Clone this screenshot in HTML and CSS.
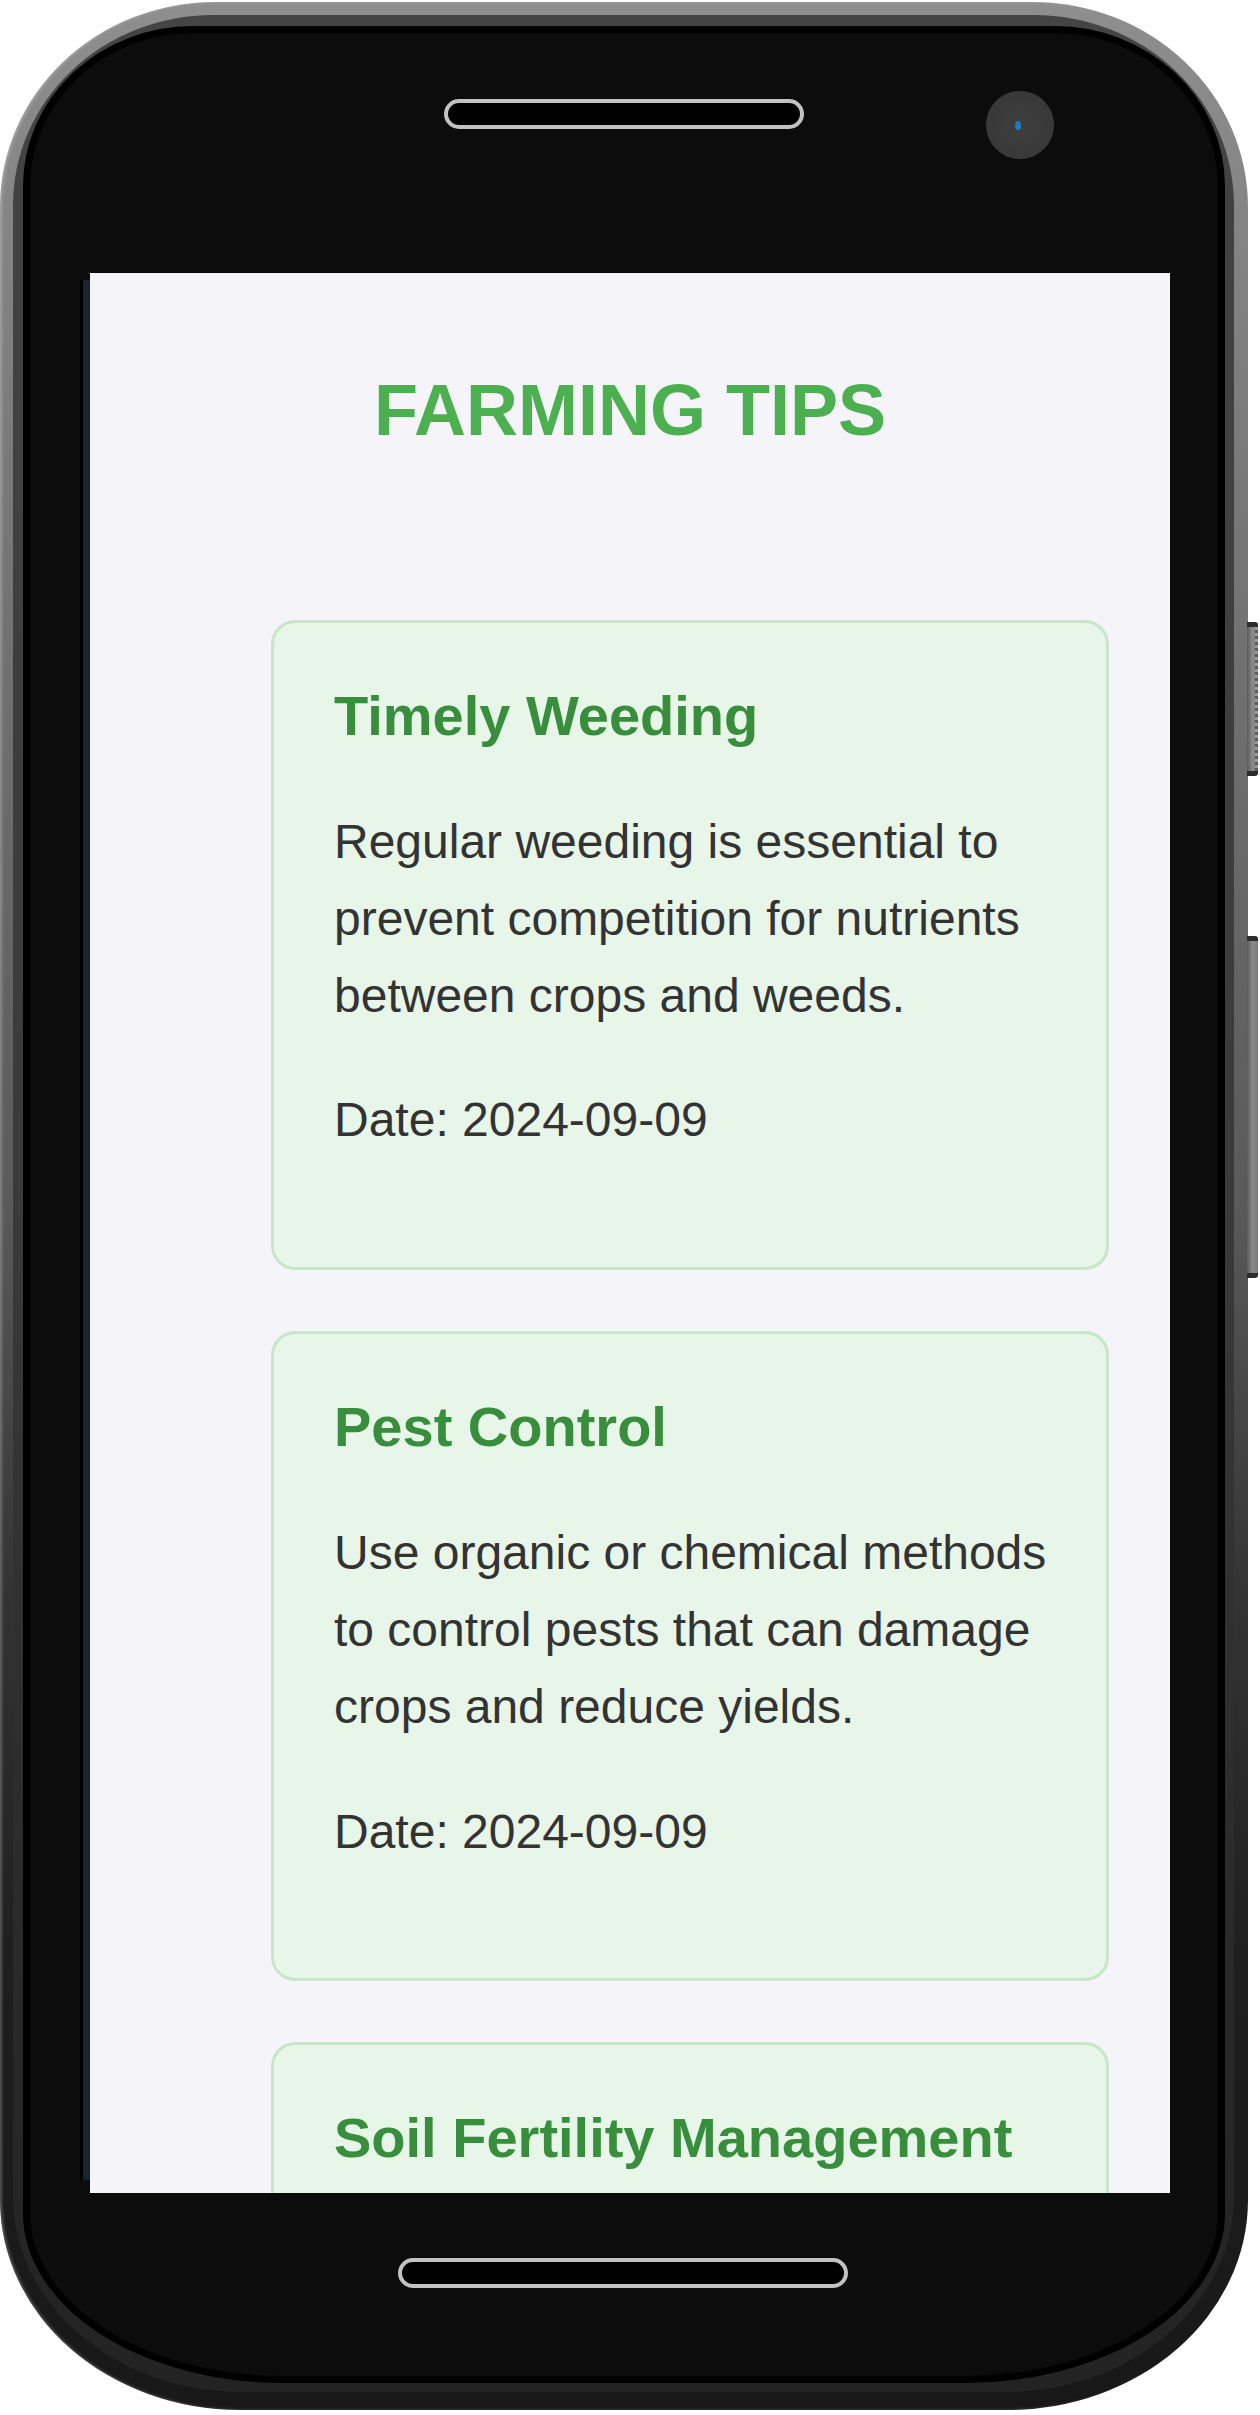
FILE: index.html
```html
<!DOCTYPE html>
<html lang="en">
<head>
<meta charset="utf-8">
<title>Farming Tips</title>
<link rel="stylesheet" href="styles.css">
</head>
<body>
<div class="device">
  <span class="side-btn side-btn-top"></span>
  <span class="side-btn side-btn-long"></span>
  <div class="shell">
    <div class="rim">
      <div class="face">
        <span class="speaker"></span>
        <span class="camera"><span class="lens"></span></span>
        <span class="screen-edge"></span>
        <main class="screen">
          <h1 class="title">FARMING TIPS</h1>
          <section class="tips">
            <article class="tip">
              <h3 class="tip-title">Timely Weeding</h3>
              <p class="tip-text">Regular weeding is essential to prevent competition for nutrients between crops and weeds.</p>
              <p class="tip-text">Date: 2024-09-09</p>
            </article>
            <article class="tip">
              <h3 class="tip-title">Pest Control</h3>
              <p class="tip-text">Use organic or chemical methods to control pests that can damage crops and reduce yields.</p>
              <p class="tip-text">Date: 2024-09-09</p>
            </article>
            <article class="tip">
              <h3 class="tip-title">Soil Fertility Management</h3>
            </article>
          </section>
        </main>
        <span class="home-bar"></span>
      </div>
    </div>
  </div>
</div>
</body>
</html>
```

FILE: styles.css
```css
* {
  box-sizing: border-box;
}

html, body {
  margin: 0;
  padding: 0;
  background: #ffffff;
}

body {
  width: 1260px;
  height: 2415px;
  overflow: hidden;
  font-family: "Liberation Sans", Arial, Helvetica, sans-serif;
}

.device {
  position: relative;
  width: 1260px;
  height: 2415px;
  padding-top: 2px;
}

.shell {
  width: 1248px;
  height: 2408px;
  padding: 13px 14px 18px 13px;
  border-radius: 215px 215px 240px 240px / 205px 205px 210px 210px;
  background: linear-gradient(180deg, #8e8e8e 0%, #6e6e6e 30%, #5a5a5a 50%, #343434 66%, #1e1e1e 82%, #181818 100%);
  box-shadow: inset 2px 0 3px rgba(255, 255, 255, 0.25);
}

.rim {
  height: 100%;
  padding: 11px 9px 9px 10px;
  border-radius: 200px 200px 228px 228px / 190px 190px 196px 196px;
  background: linear-gradient(180deg, #444444 0%, #3a3a3a 50%, #2a2a2a 80%, #232323 100%);
}

.face {
  position: relative;
  height: 100%;
  padding: 240px 48px 0 60px;
  border: 7px solid #000000;
  border-radius: 170px 170px 260px 260px / 160px 160px 170px 170px;
  background: #0c0c0c;
}

.speaker {
  position: absolute;
  left: 414px;
  top: 66px;
  width: 360px;
  height: 30px;
  border: 4px solid #c2c2c2;
  border-radius: 15px;
  background: #000000;
}

.home-bar {
  position: absolute;
  left: 368px;
  top: 2225px;
  width: 450px;
  height: 30px;
  border: 4px solid #c2c2c2;
  border-radius: 15px;
  background: #000000;
}

.camera {
  position: absolute;
  left: 956px;
  top: 58px;
  width: 68px;
  height: 68px;
  border-radius: 50%;
  background: radial-gradient(circle at 50% 50%, #3e3e3e 0%, #393939 70%, #2c2c2c 100%);
  display: flex;
  align-items: center;
  justify-content: center;
}

.lens {
  width: 6px;
  height: 9px;
  border-radius: 50%;
  background: #1f7ac0;
  margin-left: -5px;
}

.screen-edge {
  position: absolute;
  left: 50px;
  top: 247px;
  width: 10px;
  height: 1900px;
  border-left: 3px solid #000000;
  background: #1d2230;
}

.screen {
  position: relative;
  width: 1080px;
  height: 1920px;
  overflow: hidden;
  background: #f4f4f9;
  padding-top: 48px;
}

.title {
  margin: 48px 0;
  font-size: 72px;
  font-weight: 700;
  line-height: normal;
  text-align: center;
  color: #4caf50;
}

.tips {
  display: flex;
  flex-direction: column;
  gap: 61px;
  padding: 121px 61px 0 181px;
}

.tip {
  background: #e8f5e9;
  border: 3px solid #c8e6c9;
  border-radius: 24px;
  padding: 60px 56px 60px 60px;
}

.tip-title {
  margin: 0 0 56px;
  font-size: 56px;
  font-weight: 700;
  line-height: normal;
  color: #388e3c;
}

.tip-text {
  margin: 48px 0;
  font-size: 48px;
  line-height: 1.6;
  color: #333333;
}

.side-btn {
  position: absolute;
  left: 1247px;
  width: 11px;
  border-top: 5px solid #2c2c2c;
  border-bottom: 5px solid #2c2c2c;
  border-radius: 0 3px 3px 0;
  background: linear-gradient(90deg, #5a5a5a 0%, #8a8a8a 50%, #7a7a7a 100%);
}

.side-btn-top {
  top: 622px;
  height: 154px;
  background:
    repeating-linear-gradient(180deg, #9a9a9a 0 3px, #5c5c5c 3px 6px) right / 3px 100% no-repeat,
    linear-gradient(90deg, #5a5a5a 0%, #8a8a8a 50%, #7a7a7a 100%);
}

.side-btn-long {
  top: 936px;
  height: 342px;
}
```
